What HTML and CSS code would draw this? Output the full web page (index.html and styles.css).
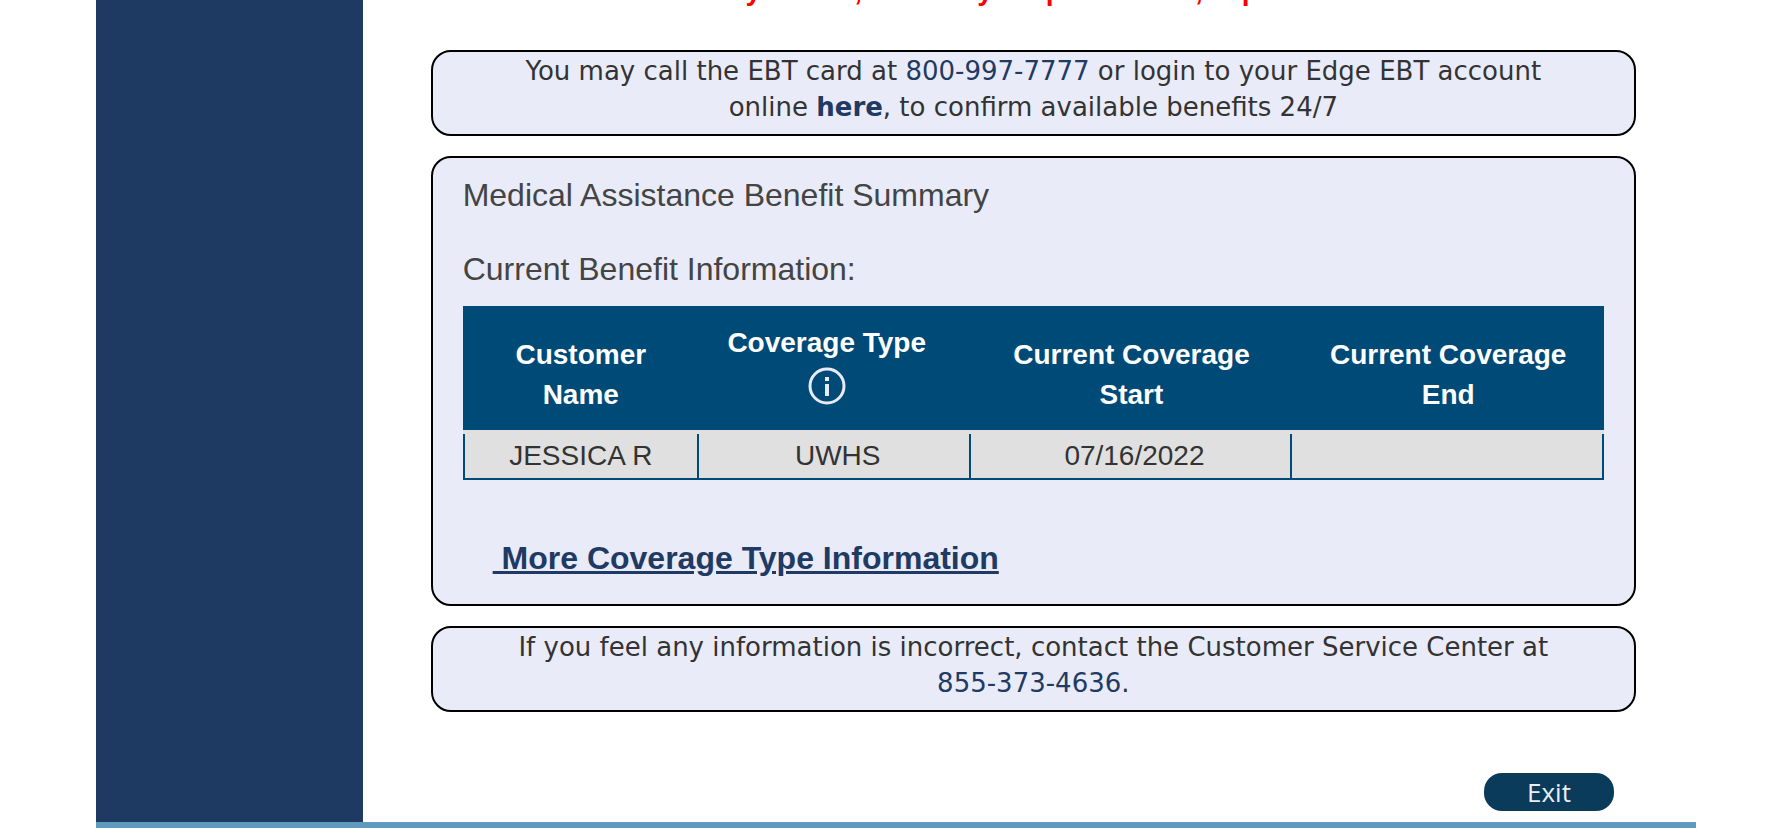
FILE: index.html
```html
<!DOCTYPE html>
<html lang="en">
<head>
  <meta charset="UTF-8">
  <meta name="viewport" content="width=device-width, initial-scale=1.0">
  <title>Benefit Summary</title>
  <link rel="stylesheet" href="styles.css">
</head>
<body>
  <div class="page">
    <div class="columns">
      <aside class="sidebar"></aside>
      <main class="content">
        <p class="warning">use by others, without your permission, is prohibited.</p>

        <section class="box note">
          <p>You may call the EBT card at <a href="tel:800-997-7777">800-997-7777</a> or login to your Edge EBT account online <a class="strong" href="#">here</a>, to confirm available benefits 24/7</p>
        </section>

        <section class="box summary">
          <h2>Medical Assistance Benefit Summary</h2>
          <h3>Current Benefit Information:</h3>
          <table class="benefits">
            <colgroup>
              <col class="col-name">
              <col class="col-type">
              <col class="col-start">
              <col class="col-end">
            </colgroup>
            <thead>
              <tr>
                <th>Customer Name</th>
                <th class="type">Coverage Type
                  <button class="info" type="button" aria-label="Coverage type help">
                    <svg viewBox="0 0 38 38" width="38" height="38">
                      <circle cx="19" cy="19" r="17" fill="none" stroke="#e9ebf8" stroke-width="3"/>
                      <rect x="17" y="10" width="4" height="4" fill="#e9ebf8"/>
                      <rect x="17" y="17" width="4" height="12" fill="#e9ebf8"/>
                    </svg>
                  </button>
                </th>
                <th>Current Coverage Start</th>
                <th>Current Coverage End</th>
              </tr>
            </thead>
            <tbody>
              <tr>
                <td>JESSICA R</td>
                <td>UWHS</td>
                <td>07/16/2022</td>
                <td></td>
              </tr>
            </tbody>
          </table>
          <a class="more" href="#">&nbsp;More Coverage Type Information</a>
        </section>

        <section class="box note">
          <p>If you feel any information is incorrect, contact the Customer Service Center at <a href="tel:855-373-4636">855-373-4636</a>.</p>
        </section>

        <div class="actions">
          <button class="exit" type="button">Exit</button>
        </div>
      </main>
    </div>
    <footer class="footer"></footer>
  </div>
</body>
</html>
```
FILE: styles.css
```css
* {
  margin: 0;
  padding: 0;
  box-sizing: border-box;
}

body {
  background-color: #fff;
  color: #333;
  font-family: 'Liberation Sans', Arial, sans-serif;
  overflow: hidden;
}

a {
  color: #1f3a63;
  text-decoration: none;
}

.page {
  display: flex;
  flex-direction: column;
  max-width: 1600px;
  height: 100vh;
  margin: 0 auto;
}

.columns {
  display: flex;
  flex: 1;
}

.sidebar {
  flex: 0 0 calc(100% / 6);
  background-color: #1f3a62;
}

.content {
  flex: 1;
  display: flex;
  flex-direction: column;
  gap: 20px;
  padding: 0 60px 0 68px;
}

/* last line of the warning, scrolled almost out of view */
.warning {
  margin: -27px 0 21px;
  padding-right: 8px;
  line-height: 36px;
  font-size: 28px;
  font-weight: bold;
  color: #f00;
  text-align: center;
}

.box {
  background-color: #e9ebf8;
  border: 2px solid #000;
  border-radius: 20px;
}

.note {
  padding: 1px 60px 9px;
  font-family: Verdana, 'DejaVu Sans', sans-serif;
  font-size: 26px;
  line-height: 36px;
  text-align: center;
}

.strong {
  font-weight: bold;
}

.summary {
  padding: 18px 30px 26px;
}

.summary h2,
.summary h3 {
  font-size: 32px;
  font-weight: normal;
  line-height: 38px;
  color: #444;
}

.summary h3 {
  margin: 36px 0 18px;
}

.benefits {
  width: 100%;
  table-layout: fixed;
  border-collapse: separate;
  border-spacing: 0;
  background-color: #e0e0e0;
  font-size: 28px;
  line-height: 40px;
  text-align: center;
}

.col-name {
  width: 20.7%;
}

.col-type {
  width: 23.8%;
}

.col-start {
  width: 28.2%;
}

.col-end {
  width: 27.3%;
}

.benefits th {
  height: 124px;
  padding: 14px 24px 0;
  background-color: #004a78;
  color: #fff;
}

.benefits .type {
  padding: 14px 40px 24px 24px;
}

.info {
  display: block;
  height: 40px;
  margin: 0 auto;
  padding-top: 4px;
  border: none;
  background: none;
  cursor: pointer;
}

.benefits td {
  height: 46px;
  padding-left: 8px;
  border: 2px solid #004a78;
  border-width: 0 2px 2px 0;
}

.benefits td:first-child {
  padding-left: 0;
  border-left-width: 2px;
}

.benefits thead::after {
  content: '';
  display: table-row;
  height: 4px;
}

.more {
  display: block;
  width: fit-content;
  margin: 58px 0 0 30px;
  font-size: 32px;
  font-weight: bold;
  line-height: 40px;
  text-decoration: underline;
}

.actions {
  display: flex;
  justify-content: flex-end;
  margin-top: 41px;
  padding-right: 22px;
}

.exit {
  width: 130px;
  height: 38px;
  border: none;
  border-radius: 18px;
  background-color: #0b3b5b;
  color: #e9eef2;
  font-family: 'Open Sans', sans-serif;
  font-size: 26px;
  line-height: 38px;
  cursor: pointer;
}

.footer {
  height: 6px;
  background-color: #5e9bbf;
}
```
